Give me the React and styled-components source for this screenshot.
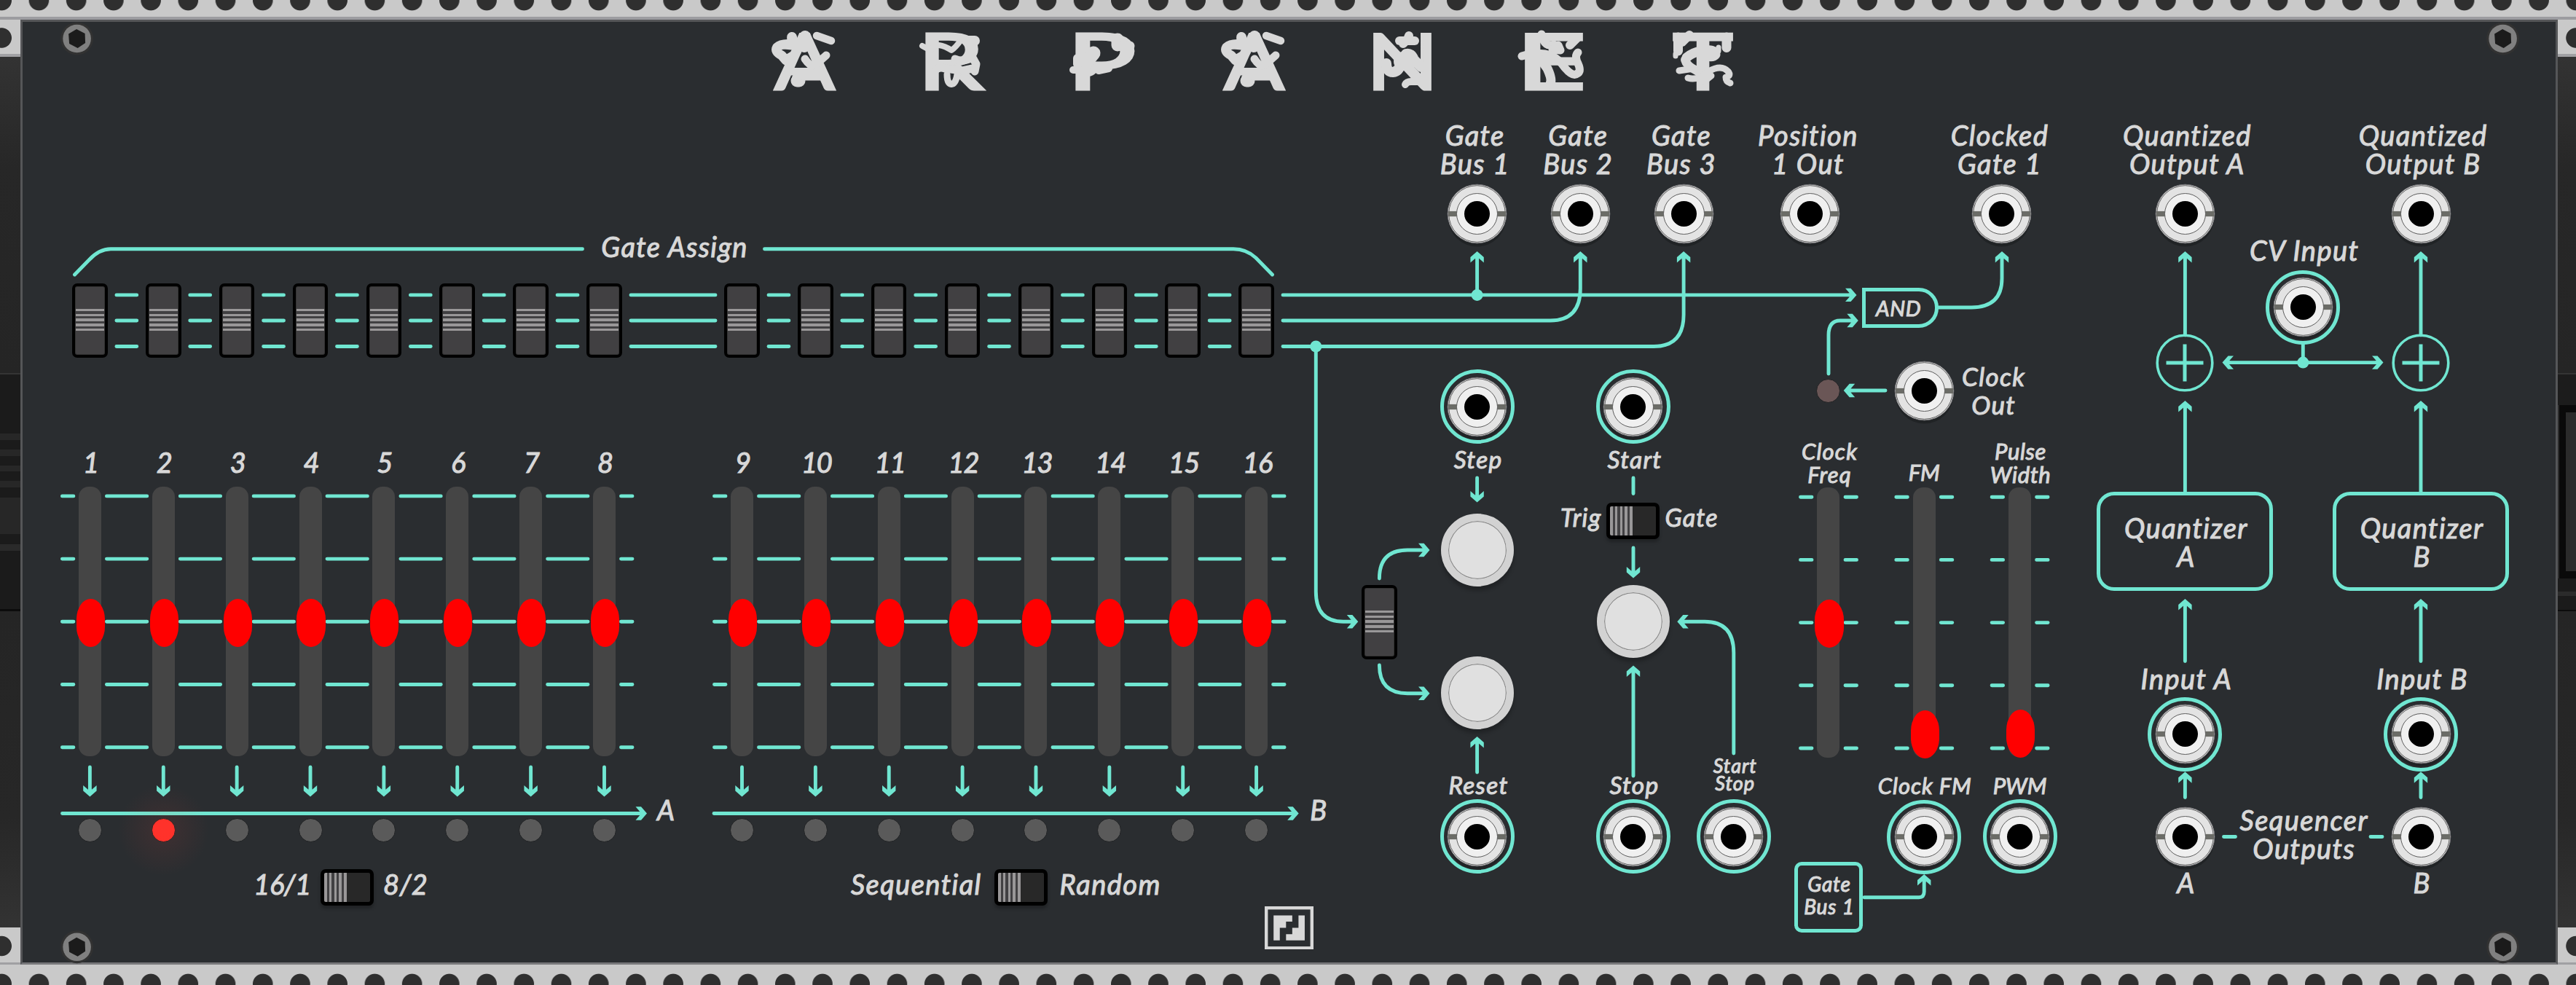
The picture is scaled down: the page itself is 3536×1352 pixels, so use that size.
import React from "react";
import styled, { createGlobalStyle } from "styled-components";

const TEAL = "#70e6d1";
const PANEL = "#2a2d30";
const INK = "#d8d8d8";

const GlobalStyle = createGlobalStyle`
  * { box-sizing: border-box; }
  html, body { margin: 0; padding: 0; background: #2b2b2b; overflow: hidden; }
  body { font-family: Lato, "Open Sans", sans-serif; }
`;

/* ---------- rack ---------- */

const Rack = styled.div`
  width: 3536px;
  height: 1352px;
  display: grid;
  grid-template-rows: 27px 1297px 28px;
  overflow: hidden;
`;

const Rail = styled.div`
  background-color: #c9c9c9;
  background-image: radial-gradient(circle at 25.6px ${(p) => (p.$bottom ? "26.4px" : "0.6px")}, #2f2f2f 13.3px, transparent 14.2px);
  background-size: 51.22px 100%;
  background-position: -23.4px 0;
  border-bottom: ${(p) => (p.$bottom ? "0" : "4px solid #9c9ca0")};
  background-origin: border-box;
`;

const Bay = styled.div`
  display: grid;
  grid-template-columns: 28px 3483px 25px;
`;

const Side = styled.div`
  display: flex;
  flex-direction: column;
  overflow: hidden;
`;

const SideRail = styled.div`
  height: 51px;
  background: radial-gradient(circle at ${(p) => p.$x}px ${(p) => (p.$bottom ? 25.5 : 25)}px, #2f2f2f 13.3px, #c9c9c9 14.2px);
  border-bottom: ${(p) => (p.$bottom ? 3 : 4)}px solid #a0a0a3;
`;

const SideVoid = styled.div`
  height: ${(p) => p.$h}px;
  background: linear-gradient(${(p) => (p.$flip ? "0deg" : "180deg")}, #333 0, #272727 35%, #252525 100%);
  border-bottom: ${(p) => (p.$flip ? "0" : "2px solid #343434")};
`;

const Slat = styled.div`
  height: ${(p) => p.$h}px;
  background: ${(p) => p.$c};
`;

const Display = styled.div`
  height: 238px;
  margin-left: 2px;
  border: solid #0a0a0a;
  border-width: 10px 0 10px 9px;
  background: #2b2b2b;
`;

/* ---------- panel ---------- */

const Panel = styled.div`
  position: relative;
  background: ${PANEL};
  border: 3px solid #555658;
  border-bottom-color: #77777a;
`;

const Overlay = styled.svg`
  position: absolute;
  left: -31px;
  top: -30px;
  pointer-events: none;
`;

const Title = styled.div`
  position: relative;
  display: flex;
  gap: 125.6px;
  height: 110px;
  padding: 14px 0 0 1032px;
`;

const TitleGlyph = styled.svg`
  width: 80px;
  height: 80px;
  overflow: visible;
  flex: none;
  fill: ${INK};
  stroke: ${INK};
  stroke-linecap: round;
  stroke-linejoin: round;

  text {
    font: 400 107px Lato, sans-serif;
    stroke-width: 3px;
    stroke-linejoin: miter;
  }
  path { fill: none; }
`;

const Main = styled.div`
  position: relative;
  display: flex;
  height: 1103.6px;
`;

const Footer = styled.div`
  display: flex;
  justify-content: center;
`;

const Sequencer = styled.section`
  width: 1798.3px;
  padding-top: 177.6px;
`;

const Label = styled.div`
  flex: none;
  margin-top: ${(p) => p.$mt || 0}px;
  margin-right: ${(p) => p.$mr || 0}px;
  font-size: ${(p) => p.$fs || 38}px;
  line-height: ${(p) => p.$lh || 40}px;
  letter-spacing: ${(p) => (p.$ls === undefined ? 0.038 : p.$ls)}em;
  font-style: italic;
  color: ${INK};
  -webkit-text-stroke: 1.1px ${INK};
  text-align: center;
  white-space: pre;
`;

const Heading = styled(Label)`
  padding-right: 8px;
`;

const Banks = styled.div`
  display: flex;
  gap: 88.1px;
  padding: 31.9px 0 0 42px;
`;

const Bank = styled.div`
  width: 807px;
  display: flex;
  flex-direction: column;
`;

const Cells = styled.div`
  display: grid;
  grid-template-columns: repeat(8, 100.87px);
  justify-items: center;
  margin-top: ${(p) => p.$mt || 0}px;
`;

const StepNumber = styled(Label)`
  padding-left: 3px;
`;

const LaneTag = styled.div`
  display: flex;
  justify-content: flex-end;
  height: 84.6px;
  padding-top: 53px;
  margin-right: -46px;
`;

const SwitchRow = styled.div`
  display: grid;
  flex: none;
  grid-template-columns: 1fr auto 1fr;
  align-items: center;
  column-gap: ${(p) => p.$gap}px;
  width: ${(p) => p.$w}px;
  height: 49.5px;
  margin-top: ${(p) => p.$mt}px;
  margin-left: ${(p) => p.$ml || 0}px;

  ${Label} { padding-bottom: 10px; }
  ${Label}:first-child { justify-self: end; }
  ${Label}:last-child { justify-self: start; }
`;

const SlideV = styled.div`
  flex: none;
  width: 48.5px;
  height: 101.5px;
  margin-top: ${(p) => p.$mt || 0}px;
  border: 4.5px solid #000;
  border-radius: 7px;
  padding: 31px 0;
  background: repeating-linear-gradient(#999798 0 3.4px, #414042 3.4px 6.7px) content-box no-repeat, #414042;
  box-shadow: inset 0 0 0 1px #333;
`;

const SlideH = styled.div`
  width: 73px;
  height: 49.5px;
  border: 5px solid #000;
  border-radius: 7px;
  background: repeating-linear-gradient(90deg, #999798 0 3.6px, #414042 3.6px 6.8px) 0 0 / 31px 100% no-repeat, #282828;
  box-shadow: 0 4px 4px rgba(0, 0, 0, 0.25);
`;

const Track = styled.div`
  flex: none;
  display: flex;
  justify-content: center;
  width: 31px;
  height: 370.5px;
  margin-top: ${(p) => p.$mt || 0}px;
  padding-top: ${(p) => p.$pos}px;
  border-radius: 14px;
  background: #454545;
`;

const Knob = styled.div`
  flex: none;
  width: 39.2px;
  height: 66px;
  margin-left: 2px;
  border-radius: 19.6px / 28px;
  background: #f00;
`;

const Led = styled.div`
  flex: none;
  width: 33px;
  height: 33px;
  margin-top: ${(p) => p.$mt || 0}px;
  border-radius: 50%;
  border: 1px solid #1f2123;
  background: ${(p) => p.$c || "#5a5a5a"};
`;

const Glow = styled.div`
  position: relative;
  display: flex;

  &::after {
    content: "";
    position: absolute;
    inset: -46px;
    border-radius: 50%;
    background: radial-gradient(closest-side, rgba(255, 70, 60, 0.1), rgba(255, 70, 60, 0));
  }
`;

const Column = styled.div`
  flex: none;
  display: flex;
  flex-direction: column;
  align-items: center;
  width: ${(p) => p.$w}px;
  margin-left: ${(p) => p.$ml || 0}px;
  padding-top: ${(p) => p.$pt || 0}px;
`;

const Voices = styled.section`
  width: 1089.2px;
  flex: none;
`;

const OutputRow = styled.div`
  display: flex;
  height: 205px;
  padding-left: 127.7px;
`;

const Controls = styled.div`
  display: flex;
`;

const Quantizers = styled.section`
  display: flex;
`;

const JackSvg = styled.svg`
  flex: none;
  width: 81px;
  height: 81px;
  margin: ${(p) => p.$mt || 0}px 0 0;
  overflow: visible;
`;

const InputRing = styled.div`
  flex: none;
  display: flex;
  align-items: center;
  justify-content: center;
  width: 102px;
  height: 102px;
  margin-top: ${(p) => p.$mt || 0}px;
  border: 5px solid ${TEAL};
  border-radius: 50%;
`;

const PushButton = styled.div`
  flex: none;
  width: 100px;
  height: 100px;
  margin-top: ${(p) => p.$mt || 0}px;
  border-radius: 50%;
  border: 10px solid #d2d2d2;
  background: #e0e0e0;
  box-shadow: inset 0 0 0 1.2px #8a8a8a, 0 6px 5px rgba(0, 0, 0, 0.22);
`;

const Box = styled.div`
  flex: none;
  display: flex;
  justify-content: center;
  width: ${(p) => p.$w}px;
  height: ${(p) => p.$h}px;
  margin-top: ${(p) => p.$mt}px;
  padding-top: ${(p) => p.$pt}px;
  border: 5px solid ${TEAL};
  border-radius: ${(p) => p.$r}px;
`;

const AndGate = styled.div`
  flex: none;
  width: 105px;
  height: 55px;
  margin: 50px 65.4px 0 0;
  padding: 0 5px 0 0;
  border: 5.2px solid ${TEAL};
  border-radius: 0 27px 27px 0;
`;

const SumSvg = styled.svg`
  flex: none;
  width: 80px;
  height: 80px;
  margin-top: 124px;
`;

function Jack({ mt }) {
  return (
    <JackSvg $mt={mt} viewBox="-40.5 -40.5 81 81">
      <circle cy="5" r="40" fill="rgba(0,0,0,.22)" />
      <circle r="40.3" fill="#e3e3e3" stroke="#77777a" strokeWidth="1" />
      <circle r="38.8" fill="none" stroke="#5e5e5e" strokeWidth="1" />
      <rect x="-39.5" y="-3.6" width="79" height="7.2" fill="#6b6c67" />
      <circle r="28" fill="#f0f0f0" stroke="#5e5e5e" strokeWidth="1" />
      <circle r="17.5" />
    </JackSvg>
  );
}

function InputJack({ mt }) {
  return (
    <InputRing $mt={mt}>
      <Jack />
    </InputRing>
  );
}

function Sum() {
  return (
    <SumSvg viewBox="-40 -40 80 80" fill="none" stroke={TEAL}>
      <circle r="37.8" strokeWidth="3.6" />
      <path d="M-25.5 0H25.5M0 -25.5V25.5" strokeWidth="5" />
    </SumSvg>
  );
}

function Fader({ mt, pos }) {
  return (
    <Track $mt={mt} $pos={pos}>
      <Knob />
    </Track>
  );
}

/* ---------- title ---------- */

/* [x, advance] of each letter inside its 80px cell */
const LETTER_BOX = {
  A: [0, 83],
  R: [-10, 92],
  P: [-10, 96],
  N: [-10, 100],
  E: [-11, 98],
  T: [-1, 83],
};

const SCRIBBLES = {
  A: [
    [14, "M24 7L25 13"],
    [13, "M25 17Q10 15 3.500 21Q0 27 10 32L16 39"],
    [11, "M14 18L34 20"],
    [16, "M42 6L41 20"],
    [10, "M17 36L32 27"],
    [10.5, "M58 5L78 12"],
    [11, "M42 37Q48 46 53 46L62 40L71 32"],
    [12, "M37 56L30 63"],
    [17, "M31 67L34 67"],
    [10, "M40 61.500H66"],
  ],
  R: [
    [8, "M-3 19L8 25Q14 17 20 18Q28 19 37 25Q43 21 50 11"],
    [14, "M59 12L69 12"],
    [11, "M42 37Q53 42 66 35L71 44L69 54"],
    [11, "M10 60Q16 46 28 50L52 53L66 50"],
    [9, "M31 58Q31 71 37 71.500Q43 71 45 58"],
  ],
  P: [
    [19, "M27 29L16 42"],
    [12, "M5 36V44"],
    [10, "M-1 52H8Q22 60 28 51Q40 43 48 50L34 53"],
    [8, "M8 68H14"],
    [17, "M60 10V18"],
    [13, "M66 20L77 19"],
  ],
  N: [
    [12, "M49 5L47 10L41 16"],
    [12, "M36 12H57"],
    [14, "M18 43Q18 55 27 55Q36 54 38 42L45 30Q52 28 56 38L66 48"],
    [26, "M41 40L46 40"],
    [10, "M44 72Q46 68 52 68H62"],
  ],
  E: [
    [11, "M25 3L28 12Q32 20 42 17"],
    [11, "M48 18L51 25L40 24"],
    [12, "M74 8L64 18"],
    [11, "M-2 33Q20 26 38 32Q50 38 57 49Q68 62 74 57Q80 54 75 43Q70 33 75 28"],
    [13, "M25 39L33 50Q40 65 37 71"],
  ],
  T: [
    [12, "M22 4L12 14"],
    [13, "M6.500 7V26M73 7V21.500"],
    [7, "M3 30V33M62 21V26"],
    [13, "M18 35Q26 28 38 26Q58 22 58 31Q54 36 42 32"],
    [12, "M16 38Q18 46 30 52L46 62"],
    [9, "M8 53L28 50L48 54Q66 44 75 54Q80 60 72 62Q72 68 78 70"],
    [9, "M20 63Q32 67 46 56M42 68L52 60"],
  ],
};

function TitleLetter({ letter }) {
  const [x, advance] = LETTER_BOX[letter];
  return (
    <TitleGlyph viewBox="0 0 80 80">
      <text x={x} y="78.5" textLength={advance} lengthAdjust="spacingAndGlyphs">
        {letter}
      </text>
      {SCRIBBLES[letter].map(([w, d], i) => (
        <path key={i} d={d} strokeWidth={w} />
      ))}
    </TitleGlyph>
  );
}

/* ---------- wiring ---------- */

const HEAD = "M0 0L-8 -9.200H-15.500L-9.500 -2.300H-11V2.300H-9.500L-15.500 9.200H-8Z";

function Tip({ x, y, dir }) {
  const turn = { right: 0, down: 90, left: 180, up: 270 }[dir];
  return <path d={HEAD} transform={`translate(${x} ${y}) rotate(${turn})`} fill={TEAL} stroke="none" />;
}

const PITCH = 100.87;
const BANK_X = [123.4, 1018.5];
const COLS = BANK_X.flatMap((x) => Array.from({ length: 8 }, (_, i) => x + i * PITCH));
const TICKS = [680.9, 767.1, 853.3, 939.5, 1025.7];
const BUSES = [404.9, 440, 475.5];

const WIRES = [
  "M102.500 377L122 357Q136 341.800 152 341.800H799.500",
  "M1049.500 341.800H1693Q1711 341.800 1724 354L1746.500 377",
  "M1761 404.900H2541",
  "M1761 440H2128Q2169.300 440 2169.300 396V352",
  "M1761 475.500H2270Q2311.100 475.500 2311.100 432V352",
  "M2027.600 404.900V352",
  "M1806.300 475.500V812Q1806.300 853.300 1844 853.300H1857",
  "M1893.400 794Q1893.400 755 1932 755H1955",
  "M1893.400 913Q1893.400 951.700 1932 951.700H1955",
  "M2027.600 656V682M2242 656V677.500M2242 752V786",
  "M2242 1065V921M2379.800 1034V896Q2379.800 853.300 2340 853.300H2309",
  "M2027.600 1060V1018",
  "M2510 513V460Q2510 440 2526 440H2543",
  "M2588 536H2538",
  "M2661 422H2706Q2748 422 2748 382V352",
  "M2559 1231.700H2634Q2641.200 1231.700 2641.200 1224V1208",
  "M3161.300 472V497.600M3058 497.600H3264",
  "M3052.500 1148.500H3068.500M3254 1148.500H3270",
];

const TIPS = [
  [2548.5, 404.9, "right"], [2027.6, 345, "up"], [2169.3, 345, "up"], [2311.1, 345, "up"],
  [1864.3, 853.3, "right"], [1962.5, 755, "right"], [1962.5, 951.7, "right"],
  [2027.6, 689.6, "down"], [2242, 793.6, "down"], [2242, 913.5, "up"], [2302.3, 853.3, "left"],
  [2027.6, 1011, "up"], [2550.8, 440, "right"], [2530.7, 536, "left"], [2748, 345, "up"],
  [2641.2, 1200, "up"], [3050.5, 497.6, "left"], [3271.5, 497.6, "right"],
];

function Wiring() {
  const out = [];
  BUSES.forEach((y) => {
    COLS.slice(0, -1).forEach((x, i) => {
      out.push(`M${x + 36.5} ${y}H${COLS[i + 1] - 36.5}`);
    });
  });
  TICKS.forEach((y) => {
    BANK_X.forEach((x) => {
      out.push(`M${x - 38} ${y}h15.500`);
      for (let i = 0; i < 7; i++) out.push(`M${x + i * PITCH + 23} ${y}H${x + (i + 1) * PITCH - 22.5}`);
      out.push(`M${x + 7 * PITCH + 23} ${y}h15.500`);
    });
    [2510, 2641.3, 2772.6].forEach((x) => {
      out.push(`M${x - 38.5} ${y + 1.3}h15.500M${x + 23} ${y + 1.3}h15.500`);
    });
  });
  COLS.forEach((x) => out.push(`M${x} 1053V1086`));
  out.push("M85.500 1116.500H880", "M980 1116.500H1775");
  const tips = [...TIPS, [888, 1116.5, "right"], [1782.7, 1116.5, "right"]];
  COLS.forEach((x) => tips.push([x, 1093.6, "down"]));
  [2999.4, 3323].forEach((x) => {
    out.push(`M${x} 460V352M${x} 676V557M${x} 907.500V829M${x} 1094.500V1066`);
    [345, 550, 822, 1059.3].forEach((y) => tips.push([x, y, "up"]));
  });
  return (
    <Overlay width="3536" height="1352" viewBox="0 0 3536 1352">
      <g fill="none" stroke={TEAL} strokeWidth="4.9" strokeLinecap="round">
        <path d={out.join("")} />
        <path d={WIRES.join("")} />
      </g>
      {tips.map(([x, y, dir], i) => (
        <Tip key={i} x={x} y={y} dir={dir} />
      ))}
      {[[2027.6, 404.9], [1806.3, 475.5], [3161.3, 497.6]].map(([x, y]) => (
        <circle key={x} cx={x} cy={y} r="8" fill={TEAL} />
      ))}
      {[105.6, 3435.6].map((x) =>
        [53, 1299.8].map((y) => (
          <g key={`${x}-${y}`} transform={`translate(${x} ${y})`}>
            <circle r="22.500" fill="#323232" />
            <circle r="19.300" fill="#808080" />
            <path d="M-.5 -13L11 -7L11.500 6L1 13L-10.500 7L-11.500 -6.500Z" fill="#1b1b1b" />
          </g>
        ))
      )}
    </Overlay>
  );
}

function MakerLogo() {
  return (
    <svg width="67" height="59.5" viewBox="0 0 67 59.5" fill={INK}>
      <rect x="2.2" y="2.2" width="62.6" height="55.1" fill="none" stroke={INK} strokeWidth="4.4" />
      <g transform="translate(12.2 12.500) scale(8.550)">
        <path d="M0 0H3V1H2V2H1V4H0Z" />
        <path d="M4 0H5V4H2V3H3V2H4Z" />
      </g>
    </svg>
  );
}

function StepBank({ first, tag, children }) {
  const steps = Array.from({ length: 8 }, (_, i) => first + i);
  return (
    <Bank>
      <Cells>{steps.map((n) => <SlideV key={n} />)}</Cells>
      <Cells $mt={122.8}>{steps.map((n) => <StepNumber key={n} $ls={n > 9 ? -0.03 : 0}>{n}</StepNumber>)}</Cells>
      <Cells $mt={14}>{steps.map((n) => <Fader key={n} pos={154} />)}</Cells>
      <LaneTag><Label $ls={0}>{tag}</Label></LaneTag>
      <Cells>
        {steps.map((n) => (n === 2 ? <Glow key={n}><Led $c="#ff3029" /></Glow> : <Led key={n} />))}
      </Cells>
      {children}
    </Bank>
  );
}

function QuantizerColumn({ name }) {
  return (
    <Column $w={161.8} $pt={26.1}>
      <Label $lh={39} $mr={-6}>{`Quantized\nOutput ${name}`}</Label>
      <Jack mt={8.9} />
      <Sum />
      <Box $w={242} $h={136.3} $mt={137} $pt={25} $r={24}>
        <Label $lh={39} $mr={-3}>{`Quantizer\n${name}`}</Label>
      </Box>
      <Label $mt={99.3} $mr={-4}>{`Input ${name}`}</Label>
      <InputJack mt={6.4} />
      <Jack mt={49} />
      <Label $mt={2} $mr={-3}>{name}</Label>
    </Column>
  );
}

function Output({ w, text }) {
  return (
    <Column $w={w} $pt={26.1}>
      <Label $lh={39} $mr={6}>{text}</Label>
      <Jack mt={8.9} />
    </Column>
  );
}

export default function App() {
  return (
    <Rack>
      <GlobalStyle />
      <Rail />
      <Bay>
        <Side>
          <SideRail $x={2.2} />
          <SideVoid $h={436} />
          {[[81, "#1b1b1b"], [9, "#272727"], [13, "#1b1b1b"], [9, "#272727"], [13, "#1b1b1b"], [8, "#272727"], [13, "#1b1b1b"], [9, "#272727"], [14, "#1b1b1b"], [50, "#272727"], [14, "#1b1b1b"], [9, "#2a2a2a"], [80, "#1b1b1b"], [3, "#0c0c0c"]].map(([h, c], i) => (
            <Slat key={i} $h={h} $c={c} />
          ))}
          <SideVoid $h={434} $flip />
          <SideRail $x={2.2} $bottom />
        </Side>
        <Panel>
          <Wiring />
          <Title>
            {"ARPANET".split("").map((c, i) => <TitleLetter key={i} letter={c} />)}
          </Title>
          <Main>
            <Sequencer>
              <Heading>Gate Assign</Heading>
              <Banks>
                <StepBank first={1} tag="A">
                  <SwitchRow $w={807} $gap={13} $mt={36.9}>
                    <Label $ls={-0.01}>16/1</Label>
                    <SlideH />
                    <Label $ls={0.01}>8/2</Label>
                  </SwitchRow>
                </StepBank>
                <StepBank first={9} tag="B">
                  <SwitchRow $w={807} $gap={17} $mt={36.9} $ml={29.5}>
                    <Label>Sequential</Label>
                    <SlideH />
                    <Label>Random</Label>
                  </SwitchRow>
                </StepBank>
              </Banks>
            </Sequencer>
            <Voices>
              <OutputRow>
                <Output w={141.5} text={"Gate\nBus 1"} />
                <Output w={141.7} text={"Gate\nBus 2"} />
                <Output w={141.8} text={"Gate\nBus 3"} />
                <Output w={206} text={"Position\n1 Out"} />
                <Output w={320} text={"Clocked\nGate 1"} />
              </OutputRow>
              <Controls>
                <Column $w={128}>
                  <SlideV $mt={458} />
                </Column>
                <Column $w={140.6}>
                  <InputJack mt={162} />
                  <Label $fs={33.5} $mt={1.2} $mr={-3}>Step</Label>
                  <PushButton $mt={54.6} />
                  <PushButton $mt={96.1} />
                  <Label $fs={33.5} $mt={56.3} $mr={-4}>Reset</Label>
                  <InputJack mt={0.3} />
                </Column>
                <Column $w={137.8} $ml={75.2}>
                  <InputJack mt={162} />
                  <Label $fs={33.5} $mt={1.2} $mr={-4}>Start</Label>
                  <SwitchRow $w={280} $gap={7} $mt={39.8}>
                    <Label $fs={34}>Trig</Label>
                    <SlideH />
                    <Label $fs={34}>Gate</Label>
                  </SwitchRow>
                  <PushButton $mt={63.7} />
                  <Label $fs={33.5} $mt={154} $mr={-3}>Stop</Label>
                  <InputJack mt={0.3} />
                </Column>
                <Column $w={137.8}>
                  <Label $fs={27} $lh={24.5} $mt={693.8} $mr={-4}>{"Start\nStop"}</Label>
                  <InputJack mt={9.7} />
                </Column>
                <Column $w={122.6}>
                  <Led $mt={174.5} $c="#6a5656" />
                  <Label $fs={31} $lh={32} $mt={50.5} $mr={-3}>{"Clock\nFreq"}</Label>
                  <Fader mt={2} pos={153.7} />
                  <Box $w={94.5} $h={97} $mt={143} $pt={10} $r={10}>
                    <Label $fs={28} $lh={31.5} $ls={0.03} $mr={-2}>{"Gate\nBus 1"}</Label>
                  </Box>
                </Column>
                <Column $w={140}>
                  <AndGate><Label $fs={29.5} $lh={46} $ls={0.02}>AND</Label></AndGate>
                  <Jack mt={45.5} />
                  <Label $fs={31} $lh={32} $mt={55.5} $ls={0}>FM</Label>
                  <Fader mt={5} pos={305.5} />
                  <Label $fs={31} $mt={18.5} $ls={0.03} $mr={-2}>Clock FM</Label>
                  <InputJack mt={-0.5} />
                </Column>
                <Column $w={122.6}>
                  <Label $fs={35} $lh={38.5} $mt={152.2} $mr={72}>{"Clock\nOut"}</Label>
                  <Label $fs={31} $lh={32} $mt={28.8} $ls={0.02} $mr={-2}>{"Pulse\nWidth"}</Label>
                  <Fader mt={2} pos={305.5} />
                  <Label $fs={31} $mt={18.5} $ls={0}>PWM</Label>
                  <InputJack mt={-0.5} />
                </Column>
              </Controls>
            </Voices>
            <Quantizers>
              <QuantizerColumn name="A" />
              <Column $w={161.9}>
                <Label $mt={182.8} $mr={-4}>CV Input</Label>
                <InputJack mt={8.2} />
                <Label $lh={39.4} $mt={632.6} $mr={-3}>{"Sequencer\nOutputs"}</Label>
              </Column>
              <QuantizerColumn name="B" />
            </Quantizers>
          </Main>
          <Footer><MakerLogo /></Footer>
        </Panel>
        <Side>
          <SideRail $x={25} />
          <SideVoid $h={436} />
          <Slat $h={42} $c="#1c1c1c" />
          <Display />
          <Slat $h={18} $c="#1b1b1b" />
          <Slat $h={6} $c="#2b2b2b" />
          <Slat $h={19} $c="#1b1b1b" />
          <Slat $h={2} $c="#0c0c0c" />
          <SideVoid $h={434} $flip />
          <SideRail $x={25} $bottom />
        </Side>
      </Bay>
      <Rail $bottom />
    </Rack>
  );
}
